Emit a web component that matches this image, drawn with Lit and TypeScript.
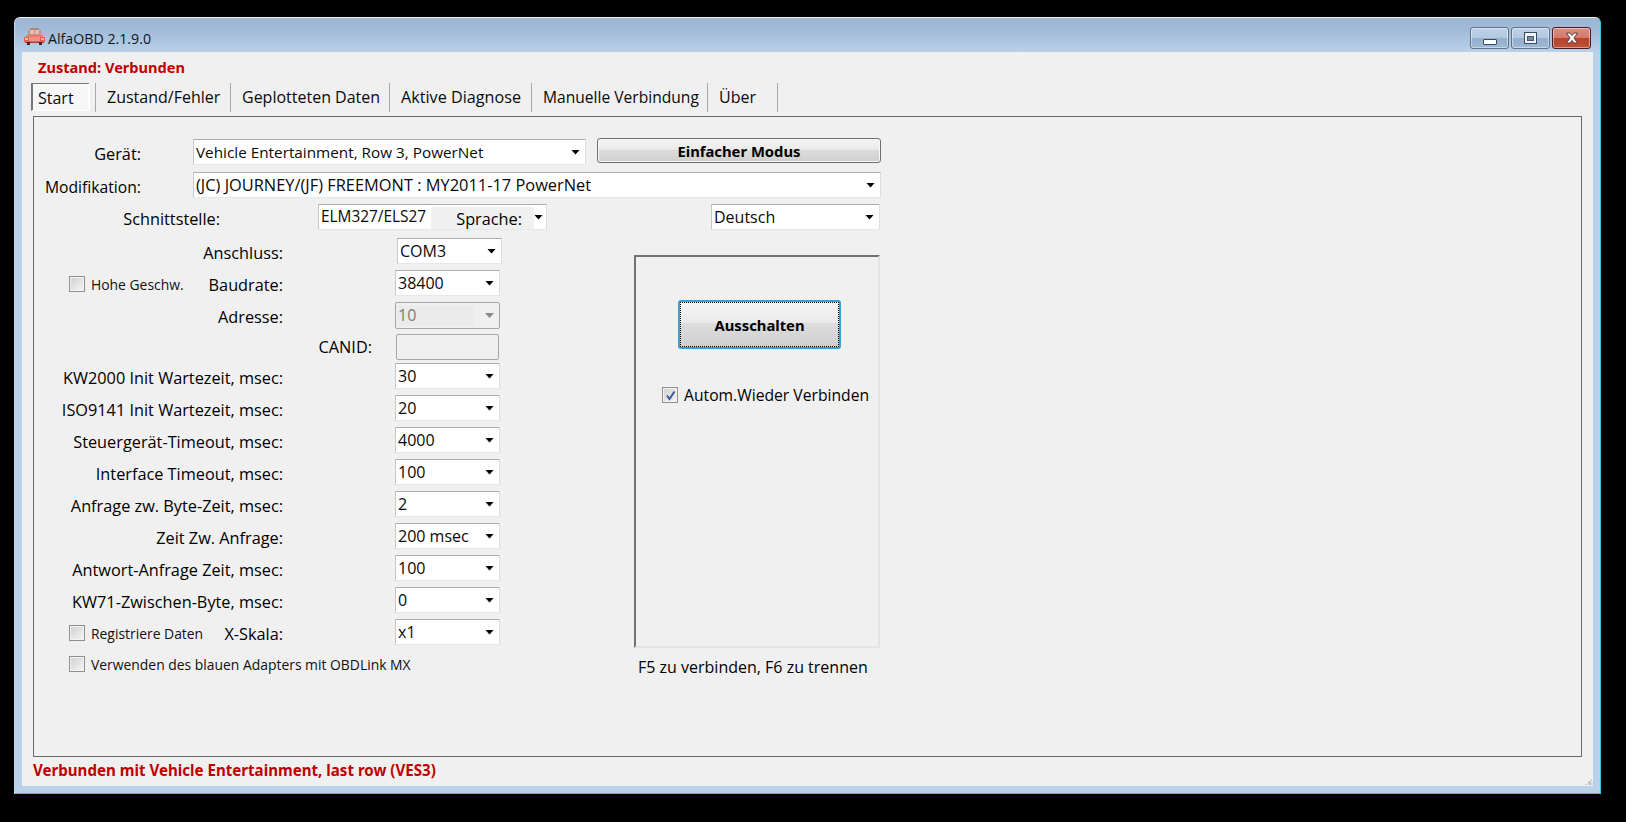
import { LitElement, html, css } from "lit";
import { customElement } from "lit/decorators.js";

const TABS = [
  { label: "Start", width: 65, size: 16, active: true },
  { label: "Zustand/Fehler", width: 135, size: 16 },
  { label: "Geplotteten Daten", width: 159, size: 16 },
  { label: "Aktive Diagnose", width: 142, size: 16.2 },
  { label: "Manuelle Verbindung", width: 176, size: 15.6 },
  { label: "Über", width: 70, size: 16 },
];

const sel = (text: string, cls = "") =>
  html`<div class="sel ${cls}"><span class="val">${text}</span><i class="arr"></i></div>`;
const box = (checked = false) =>
  html`<span class="cb">${checked
    ? html`<svg viewBox="0 0 11 11" width="11" height="11"><path d="M2 5.5 L4.5 9 L9.5 1.5" fill="none" stroke="#3f5796" stroke-width="2"/></svg>`
    : ""}</span>`;

@customElement("app-root")
export class AppRoot extends LitElement {
  static styles = css`
    :host { display: block; width: 1626px; height: 822px; background: #000; box-sizing: border-box; padding: 17px 25px 28px 14px; font-family: "Open Sans", "Noto Sans", sans-serif; font-size: 16.3px; color: #000; overflow: hidden; }
    .window { box-sizing: border-box; width: 1587px; height: 777px; display: flex; flex-direction: column; background: #b9d1ea; border: 1px solid #35c4e4; border-top-color: #e8eef4; border-left-color: #c5d6e8; border-radius: 6px 6px 0 0; position: relative; }
    .titlebar { height: 34px; flex: none; display: flex; align-items: flex-start; background: linear-gradient(#9db6d2, #a3bcd9 40%, #b9d1ea); border-radius: 5px 5px 0 0; padding-left: 9px; padding-right: 9px; }
    .icon { margin-top: 10px; flex: none; }
    .title { margin-top: 11px; margin-left: 3px; font-size: 14.2px; line-height: 20px; color: #10151c; flex: 1; }
    .wbtn { box-sizing: border-box; width: 39px; height: 22px; margin-top: 9px; margin-left: 2px; border: 1px solid #5f7288; border-radius: 3px; box-shadow: inset 0 0 0 1px rgba(255,255,255,.45); background: linear-gradient(#bdd1e6, #b3c9e1 48%, #95b0cd 50%, #9db8d5); display: flex; align-items: center; justify-content: center; }
    .wbtn.close { background: linear-gradient(#d98e82, #cf7a6d 48%, #b5442b 50%, #bd5137); border-color: #4d1a22; }
    .min { width: 12px; height: 4px; background: #fff; border: 1px solid #3a4a60; border-radius: 1px; margin-top: 8px; }
    .max { box-sizing: border-box; width: 13px; height: 12px; background: #f4f4f4; border: 1px solid #3a4a60; display: flex; align-items: center; justify-content: center; }
    .max i { display: block; width: 5px; height: 3px; background: #7389aa; border: 1px solid #47597a; }
    .client { box-sizing: border-box; flex: none; width: 1571px; height: 734px; margin: 0 7px; background: #f0f0f0; display: flex; flex-direction: column; position: relative; }
    .state { height: 31px; flex: none; padding: 5px 0 0 16px; box-sizing: border-box; font-weight: 700; color: #c00000; font-family: "Noto Sans", sans-serif; font-size: 14.6px; line-height: 20px; }
    .tabs { height: 29px; flex: none; display: flex; margin-left: 9px; margin-bottom: 4px; }
    .tab { box-sizing: border-box; height: 29px; padding: 2px 0 0 11px; line-height: 24px; border-right: 1px solid #a8a8a8; color: #0a0a0a; white-space: nowrap; }
    .tab.active { padding: 1px 0 0 0; }
    .tab.active span { display: block; box-sizing: border-box; width: 59px; height: 28px; margin-top: -1px; padding-left: 5px; padding-top: 2px; background: #f7f7f7; border: 2px solid #fff; border-top-color: #777; border-left-color: #777; border-top-width: 1px; border-bottom-width: 1px; }
    .panel { box-sizing: border-box; flex: none; width: 1549px; height: 641px; margin-left: 11px; border: 1px solid #6a6a6a; padding-top: 22px; display: flex; flex-direction: column; }
    .row { display: flex; align-items: center; height: 26px; flex: none; }
    .r2 { margin-top: 7px; } .r3 { margin-top: 6px; }
    .lab { box-sizing: border-box; text-align: right; padding-top: 4px; white-space: nowrap; line-height: 20px; }
    .lab-a { width: 107px; margin-right: 52px; }
    .lab-m { font-size: 15.7px; }
    .lab-b { width: 186px; margin-right: 98px; }
    .lab-up1 { padding-top: 2px; }
    .lab-up2 { padding-top: 0; }
    .sel { box-sizing: border-box; height: 26px; display: flex; align-items: center; justify-content: space-between; background: #fff; border: 1px solid; border-color: #abadb3 #dbdfe6 #e3e9ef #c6c8ce; flex: none; padding-left: 1px; font-size: 16px; }
    .val { padding-left: 1px; line-height: 20px; padding-bottom: 1px; white-space: nowrap; color: #0a0a0a; }
    .arr { display: block; flex: none; width: 9px; height: 5px; margin-right: 5px; background: #000; clip-path: polygon(0 0, 100% 0, 50% 100%); }
    .s-dev { width: 393px; margin-right: 11px; font-size: 15.3px; }
    .s-mod { width: 688px; font-size: 16.4px; }
    .s-if { width: 229px; margin-right: 164px; }
    .s-if .arr { margin-right: 6px; }
    .s-lang { width: 169px; }
    .s-f { width: 105px; margin-left: -1px; }
    .s-port { width: 105px; margin-left: 1px; }
    .ifval { display: flex; align-items: center; }
    .ifval .val { box-sizing: border-box; width: 111px; font-size: 15.4px; padding-bottom: 0; }
    .sprache { box-sizing: border-box; width: 103px; height: 22px; background: #f0f0f0; text-align: right; padding-right: 12px; line-height: 22px; padding-top: 1px; margin-top: 1px; font-size: 16.3px; }
    .btn { box-sizing: border-box; display: flex; align-items: center; justify-content: center; font-weight: 700; color: #000; border: 1px solid #707070; border-radius: 3px; background: linear-gradient(#f4f4f4, #ebebeb 45%, #dddddd 47%, #cfcfcf); font-family: "Noto Sans", sans-serif; font-size: 14.8px; }
    .b-simple { width: 284px; height: 25px; align-self: flex-start; margin-top: -1px; box-shadow: inset 0 0 0 1px #f8f8f8; }
    .lower { display: flex; margin-top: 8px; flex: none; }
    .fields { width: 468px; flex: none; display: flex; flex-direction: column; }
    .f { margin-top: 6px; }
    .f:first-child { margin-top: 0; }
    .f-canid { margin-top: 5px; } .f-after { margin-top: 3px; }
    .f-tall { height: 27px; }
    .lcell { box-sizing: border-box; width: 362px; height: 100%; padding-right: 113px; display: flex; align-items: center; flex: none; }
    .lcell.canid { padding-right: 24px; }
    .lcell .lab { margin-left: auto; }
    .aux { display: flex; align-items: center; padding-left: 35px; padding-top: 2px; font-size: 13.9px; color: #111; white-space: nowrap; }
    .cb { box-sizing: border-box; width: 16px; height: 16px; flex: none; border: 1px solid #8e8f8f; background: linear-gradient(135deg, #cfcfcf, #f6f6f6); box-shadow: inset 0 0 0 1px #f4f4f4; display: flex; align-items: center; justify-content: center; margin-right: 6px; }
    .dis { border: 1px solid #a6a6a6; border-radius: 2px; background: #f0f0f0; height: 27px; }
    .dis .val { color: #7a7a7a; background: #ebebeb; width: 76px; height: 20px; }
    .dis .arr { background: #8a8a8a; }
    .txt { box-sizing: border-box; width: 103px; height: 26px; border: 1px solid #a6a6a6; border-radius: 2px; background: #f0f0f0; }
    .ob { margin-top: 5px; display: flex; align-items: center; height: 26px; }
    .right { width: 246px; flex: none; margin-left: 132px; margin-top: 17px; }
    .group { box-sizing: border-box; width: 246px; height: 393px; border: 2px solid #e4e4e4; border-top-color: #727272; border-left-color: #727272; padding-top: 43px; }
    .b-off { width: 163px; height: 49px; margin-left: 42px; border: 2px solid #3b9ed6; outline: 1px dotted #000; outline-offset: -3px; }
    .auto { display: flex; align-items: center; margin: 37px 0 0 26px; white-space: nowrap; height: 18px; font-size: 15.7px; }
    .hint { margin: 8px 0 0 4px; line-height: 22px; white-space: nowrap; font-size: 16px; }
    .bottom { height: 29px; flex: none; box-sizing: border-box; padding: 3px 0 0 11px; font-weight: 700; color: #c00000; font-family: "Noto Sans", sans-serif; font-size: 15.1px; line-height: 20px; }
    .grip { position: absolute; right: 0; bottom: 0; }
  `;

  render() {
    const fields: [string, string][] = [
      ["KW2000 Init Wartezeit, msec:", "30"],
      ["ISO9141 Init Wartezeit, msec:", "20"],
      ["Steuergerät-Timeout, msec:", "4000"],
      ["Interface Timeout, msec:", "100"],
      ["Anfrage zw. Byte-Zeit, msec:", "2"],
      ["Zeit Zw. Anfrage:", "200 msec"],
      ["Antwort-Anfrage Zeit, msec:", "100"],
      ["KW71-Zwischen-Byte, msec:", "0"],
    ];
    return html`
      <div class="window">
        <div class="titlebar">
          <svg class="icon" width="21" height="18" viewBox="0 0 21 18" shape-rendering="crispEdges">
            <rect x="6" y="0" width="9" height="2" fill="#b88474"/>
            <rect x="4" y="2" width="13" height="5" fill="#c98f82"/>
            <rect x="6" y="2" width="4" height="4" fill="#dcc0ba"/>
            <rect x="11" y="2" width="4" height="4" fill="#dcc0ba"/>
            <rect x="2" y="7" width="17" height="2" fill="#f0756a"/>
            <rect x="0" y="9" width="21" height="5" fill="#ee5a55"/>
            <rect x="5" y="9" width="11" height="4" fill="#f48f86"/>
            <rect x="1" y="10" width="3" height="2" fill="#f7b9a8"/>
            <rect x="17" y="10" width="3" height="2" fill="#f7b9a8"/>
            <rect x="1" y="14" width="19" height="1" fill="#b03a34"/>
            <rect x="3" y="14" width="3" height="3" fill="#4a2620"/>
            <rect x="15" y="14" width="3" height="3" fill="#4a2620"/>
          </svg>
          <div class="title">AlfaOBD 2.1.9.0</div>
          <div class="wbtn"><div class="min"></div></div>
          <div class="wbtn"><div class="max"><i></i></div></div>
          <div class="wbtn close">
            <svg width="14" height="12" viewBox="0 0 14 12"><path d="M1.5 1 H5 L7 3.5 L9 1 H12.5 L9 6 L12.5 11 H9 L7 8.5 L5 11 H1.5 L5 6 Z" fill="#f6f6f6" stroke="#5a3238" stroke-width=".9"/></svg>
          </div>
        </div>
        <div class="client">
          <div class="state">Zustand: Verbunden</div>
          <div class="tabs">
            ${TABS.map((t) => html`<div class="tab ${t.active ? "active" : ""}" style="width:${t.width}px;font-size:${t.size}px">${t.active ? html`<span>${t.label}</span>` : t.label}</div>`)}
          </div>
          <div class="panel">
            <div class="row">
              <div class="lab lab-a">Gerät:</div>
              ${sel("Vehicle Entertainment, Row 3, PowerNet", "s-dev")}
              <div class="btn b-simple">Einfacher Modus</div>
            </div>
            <div class="row r2">
              <div class="lab lab-a lab-m">Modifikation:</div>
              ${sel("(JC) JOURNEY/(JF) FREEMONT : MY2011-17 PowerNet", "s-mod")}
            </div>
            <div class="row r3">
              <div class="lab lab-b">Schnittstelle:</div>
              <div class="sel s-if">
                <div class="ifval"><span class="val">ELM327/ELS27</span><span class="sprache">Sprache:</span></div>
                <i class="arr"></i>
              </div>
              ${sel("Deutsch", "s-lang")}
            </div>
            <div class="lower">
              <div class="fields">
                <div class="row f">
                  <div class="lcell"><div class="lab">Anschluss:</div></div>
                  ${sel("COM3", "s-port")}
                </div>
                <div class="row f">
                  <div class="lcell"><div class="aux">${box()}Hohe Geschw.</div><div class="lab">Baudrate:</div></div>
                  ${sel("38400", "s-f")}
                </div>
                <div class="row f f-tall">
                  <div class="lcell"><div class="lab lab-up1">Adresse:</div></div>
                  ${sel("10", "s-f dis")}
                </div>
                <div class="row f f-canid">
                  <div class="lcell canid"><div class="lab lab-up2">CANID:</div></div>
                  <div class="txt"></div>
                </div>
                ${fields.map(([l, v], i) => html`
                  <div class="row f ${i === 0 ? "f-after" : ""}">
                    <div class="lcell"><div class="lab">${l}</div></div>
                    ${sel(v, "s-f")}
                  </div>`)}
                <div class="row f">
                  <div class="lcell"><div class="aux">${box()}Registriere Daten</div><div class="lab">X-Skala:</div></div>
                  ${sel("x1", "s-f")}
                </div>
                <div class="ob"><div class="aux">${box()}Verwenden des blauen Adapters mit OBDLink MX</div></div>
              </div>
              <div class="right">
                <div class="group">
                  <div class="btn b-off">Ausschalten</div>
                  <div class="auto">${box(true)}Autom.Wieder Verbinden</div>
                </div>
                <div class="hint">F5 zu verbinden, F6 zu trennen</div>
              </div>
            </div>
          </div>
          <div class="bottom">Verbunden mit Vehicle Entertainment, last row (VES3)</div>
          <svg class="grip" width="9" height="9" viewBox="0 0 9 9" shape-rendering="crispEdges">
            <rect x="7" y="2" width="1" height="2" fill="#c8c8c8"/><rect x="4" y="4" width="3" height="4" fill="#c4c4c4"/><rect x="7" y="5" width="2" height="3" fill="#dcdcdc"/><rect x="1" y="7" width="2" height="1" fill="#d0d0d0"/>
          </svg>
        </div>
      </div>
    `;
  }
}
